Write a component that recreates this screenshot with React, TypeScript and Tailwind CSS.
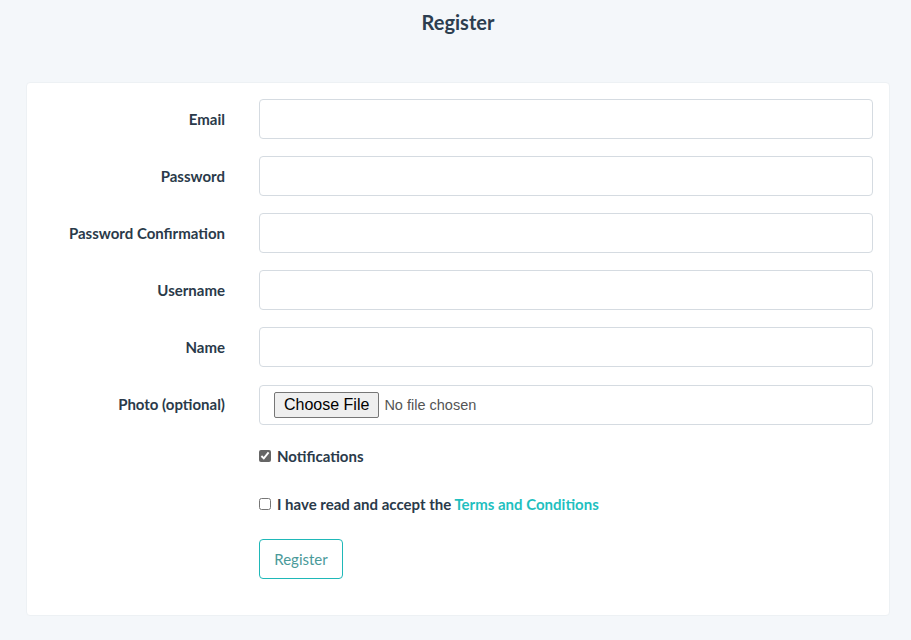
import React from 'react';

const fields = [
  { label: 'Email', type: 'email' },
  { label: 'Password', type: 'password' },
  { label: 'Password Confirmation', type: 'password' },
  { label: 'Username', type: 'text' },
  { label: 'Name', type: 'text' },
];

const App: React.FC = () => {
  return (
    <div className="min-h-[640px] bg-[#f4f7fa] pl-[26px] pr-[21px] pt-[9px] pb-[27px] text-[#2a3a4a]" style={{ fontFamily: 'Lato, "Noto Sans", sans-serif' }}>
      <h1 className="text-center text-[20px] font-bold leading-[26px] text-[#2c3e50]">Register</h1>

      <div className="mt-[47px] rounded-[4px] border border-[#edf1f4] bg-white pt-[16px] pb-[36px] pl-[15px] pr-[16px]">
        <div className="grid grid-cols-[183px_1fr] gap-x-[34px] gap-y-[17px]">
          {fields.map((f) => (
            <React.Fragment key={f.label}>
              <label className="flex h-[40px] items-center justify-end text-[15px] font-bold">{f.label}</label>
              <input
                type={f.type}
                className="h-[40px] w-full rounded-[4px] border border-[#d5dbe1] bg-white px-3 text-[14px] outline-none"
              />
            </React.Fragment>
          ))}
          <label className="flex h-[40px] items-center justify-end text-[15px] font-bold">Photo (optional)</label>
          <div className="mt-[1px] flex h-[40px] items-center rounded-[4px] border border-[#d5dbe1] px-[14px]">
            <input
              type="file"
              className="text-[14.5px] text-[#555] file:mr-[5px] file:h-[26px] file:rounded-[2px] file:border file:border-[#767676] file:bg-[#efefef] file:px-[9px] file:text-[16px] file:text-black"
              style={{ fontFamily: '"Liberation Sans", Arial, sans-serif' }}
            />
          </div>

          <div />
          <div className="flex flex-col">
            <label className="mt-[3px] flex h-[22px] items-center gap-[6px] text-[15px] font-bold">
              <input type="checkbox" defaultChecked className="h-[12px] w-[12px] accent-[#666]" />
              Notifications
            </label>
            <label className="mt-[26px] flex h-[22px] items-center gap-[6px] text-[15px] font-bold">
              <input type="checkbox" className="h-[12px] w-[12px]" />
              <span>
                I have read and accept the <a className="text-[#1fbfbf]" href="#">Terms and Conditions</a>
              </span>
            </label>
            <div className="mt-[24px]">
              <button className="h-[40px] w-[84px] rounded-[4px] border border-[#1fb8b8] bg-white text-[15px] text-[#4a9a9a]">
                Register
              </button>
            </div>
          </div>
        </div>
      </div>
    </div>
  );
};

export default App;
